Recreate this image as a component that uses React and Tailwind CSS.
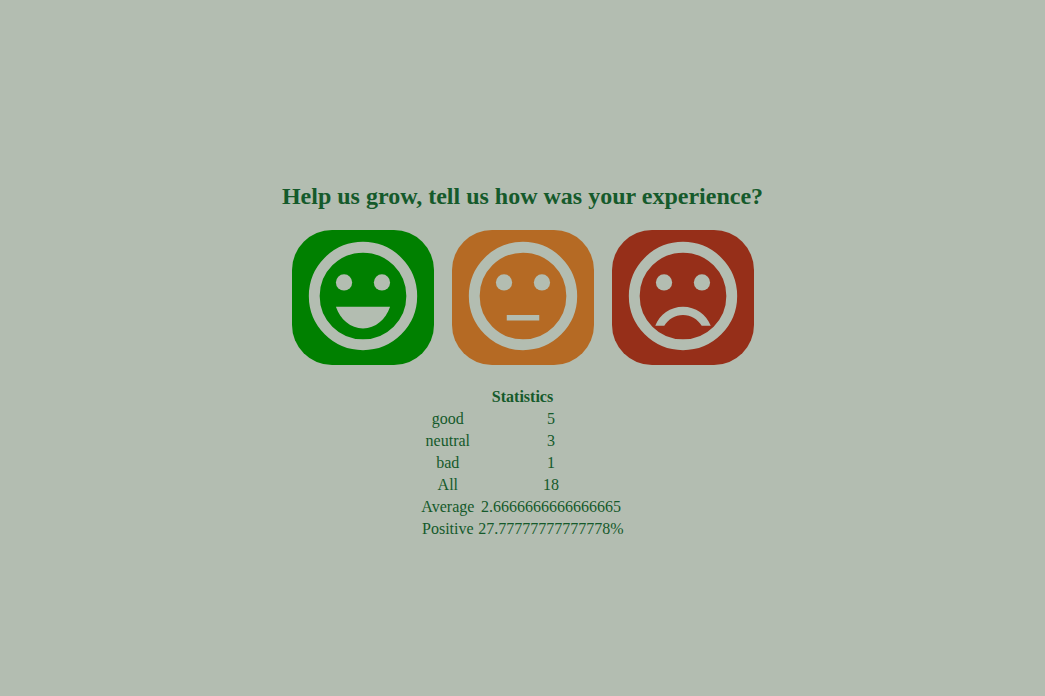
import { useState } from "react";

const choices = [
  {
    label: "good",
    mouth: "M12 18c2.28 0 4.22-1.66 5-4H7c.78 2.34 2.72 4 5 4z",
    color: "bg-[#008000]",
  },
  { label: "neutral", mouth: "M9 15.5h6v1H9z", color: "bg-[#b56a24]" },
  {
    label: "bad",
    mouth:
      "M12 14c-2.33 0-4.32 1.45-5.12 3.5h1.67c.69-1.19 1.97-2 3.45-2s2.75.81 3.45 2h1.67c-.8-2.05-2.79-3.5-5.12-3.5z",
    color: "bg-[#962f19]",
  },
];

function Face({ mouth }) {
  return (
    <svg viewBox="0 0 24 24" fill="currentColor" aria-hidden="true" className="size-[130px]">
      <circle cx="12" cy="12" r="9" fill="none" stroke="currentColor" strokeWidth="2" />
      <circle cx="8.5" cy="9.5" r="1.5" />
      <circle cx="15.5" cy="9.5" r="1.5" />
      <path d={mouth} />
    </svg>
  );
}

export default function App() {
  const [rows] = useState([
    ["good", "5"],
    ["neutral", "3"],
    ["bad", "1"],
    ["All", "18"],
    ["Average", "2.6666666666666665"],
    ["Positive", "27.77777777777778%"],
  ]);

  return (
    <main className="flex min-h-screen flex-col items-center justify-center bg-[#b3bdb1] pt-[27px] font-['Liberation_Serif',serif] text-base text-[#155a2b]">
      <h1 className="mb-5 text-2xl leading-7 font-bold">Help us grow, tell us how was your experience?</h1>
      <div className="flex justify-center gap-[18px]">
        {choices.map(({ label, mouth, color }) => (
          <button
            key={label}
            type="button"
            aria-label={label}
            className={`cursor-pointer rounded-[40px] px-[6px] pt-px pb-1 text-[#b3bdb1] ${color}`}
          >
            <Face mouth={mouth} />
          </button>
        ))}
      </div>
      <table className="mt-5 border-separate border-spacing-[2px] text-center leading-[18px]">
        <thead>
          <tr>
            <th colSpan={2} className="p-px font-bold">Statistics</th>
          </tr>
        </thead>
        <tbody>
          {rows.map(([name, value]) => (
            <tr key={name}>
              <td className="p-px">{name}</td>
              <td className="p-px">{value}</td>
            </tr>
          ))}
        </tbody>
      </table>
    </main>
  );
}
